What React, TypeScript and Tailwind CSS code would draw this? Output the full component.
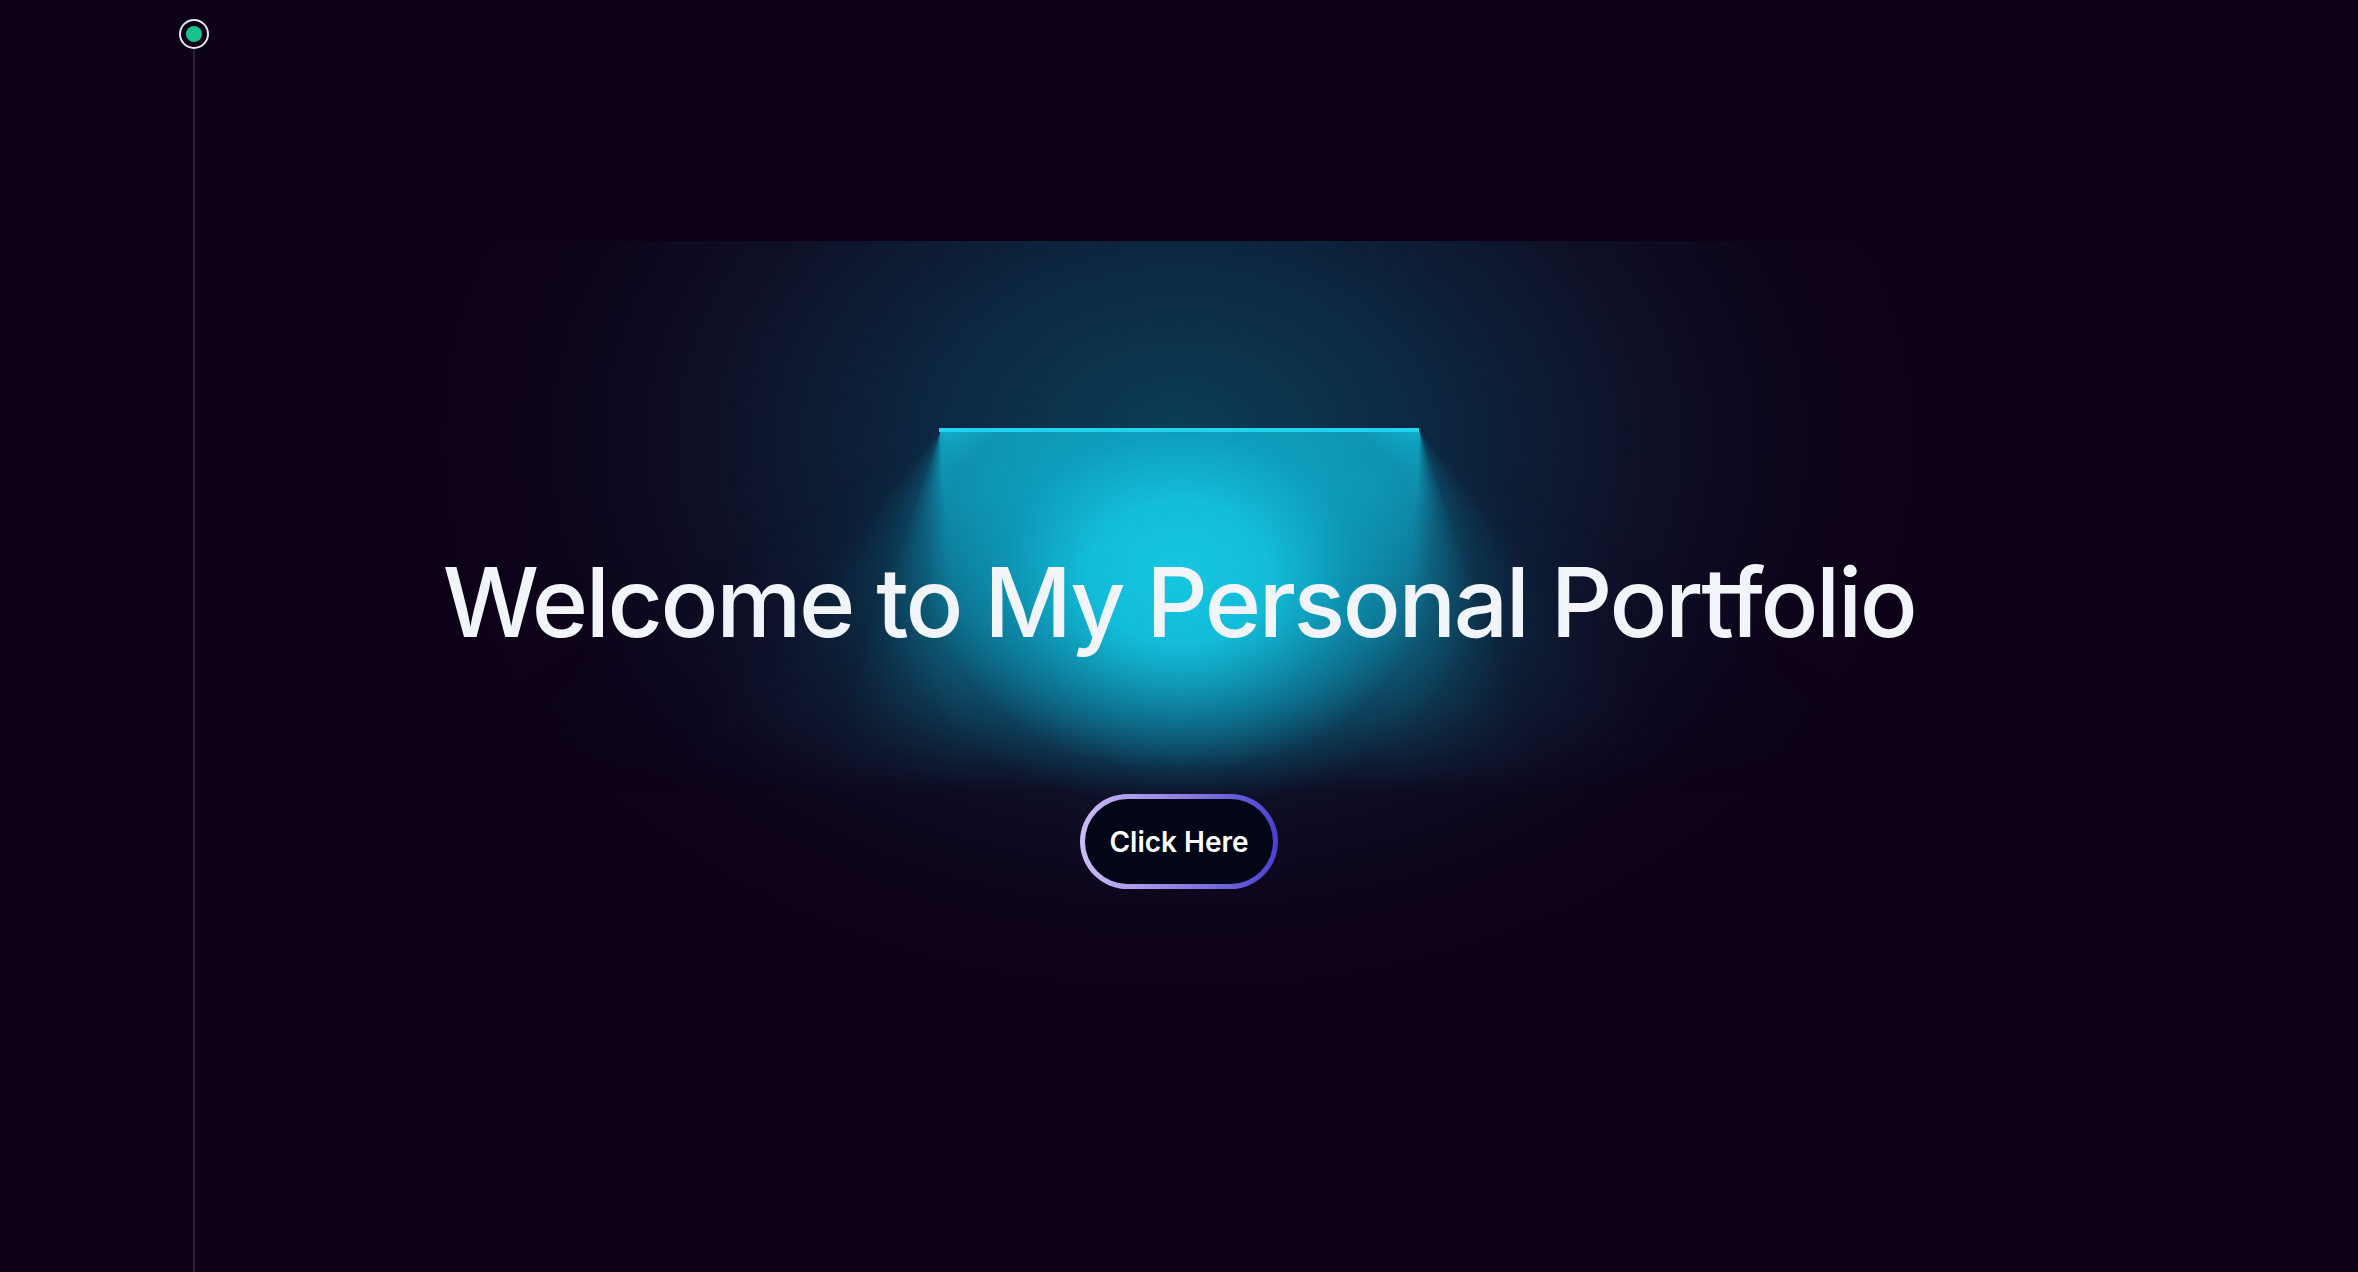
import React from "react";

export default function App() {
  return (
    <div className="relative min-h-screen w-full overflow-hidden bg-[#0d0118] font-['Inter','Noto_Sans',sans-serif]">
      {/* lamp glow layers */}
      <div className="pointer-events-none absolute inset-x-0 top-[241px] bottom-0 overflow-hidden">
        {/* broad dim teal glow */}
        <div className="absolute inset-0 bg-[radial-gradient(ellipse_780px_580px_at_1179px_200px,rgba(12,62,88,1)_0%,rgba(12,50,76,0.82)_30%,rgba(14,28,50,0.55)_60%,rgba(14,10,32,0.2)_85%,transparent_100%)]" />
        {/* below the line */}
        <div className="absolute inset-x-0 top-[191px] bottom-0 overflow-hidden">
          {/* left conic half */}
          <div className="absolute left-0 top-0 h-[520px] w-[1179px] bg-[conic-gradient(from_90deg_at_940px_0px,rgba(17,178,208,1)_0deg,rgba(16,170,202,0.95)_86deg,rgba(12,95,125,0.45)_110deg,rgba(12,50,80,0.15)_130deg,transparent_150deg,transparent_360deg)] [mask-image:linear-gradient(to_bottom,black_0px,black_60px,transparent_360px)]" />
          {/* right conic half */}
          <div className="absolute left-[1179px] top-0 h-[520px] w-[1179px] bg-[conic-gradient(from_120deg_at_241px_0px,transparent_0deg,rgba(12,50,80,0.15)_20deg,rgba(12,95,125,0.45)_40deg,rgba(16,170,202,0.95)_64deg,rgba(17,178,208,1)_150deg,transparent_150deg,transparent_360deg)] [mask-image:linear-gradient(to_bottom,black_0px,black_60px,transparent_360px)]" />
          {/* bright core */}
          <div className="absolute left-[879px] top-[-100px] h-[480px] w-[600px] bg-[radial-gradient(closest-side,#16c6e0_0%,#13bcd8_30%,rgba(13,150,182,0.7)_58%,rgba(12,80,110,0.28)_84%,transparent_100%)]" />
        </div>
      </div>

      {/* timeline */}
      <div className="absolute left-[179px] top-[19px] flex h-full flex-col items-center">
        <div className="flex h-[30px] w-[30px] items-center justify-center rounded-full border-2 border-[#e7e5ee]">
          <div className="h-[16px] w-[16px] rounded-full bg-[#14c48c]" />
        </div>
        <div className="w-[2px] flex-1 bg-[#28213a]" />
      </div>

      {/* content */}
      <div className="relative flex flex-col items-center pt-[428px]">
        <div className="h-[4px] w-[480px] bg-[#22d3ee]" />
        <h1 className="mt-[122px] text-[96px] font-medium leading-none tracking-tight text-[#f1f5f9] [font-feature-settings:'liga'_0,'calt'_0]">
          Welcome to My Personal Portfolio
        </h1>
        <button className="mt-[144px] rounded-full bg-gradient-to-r from-[#cdbcf7] via-[#8f80e4] to-[#4a3fd2] p-[5px]">
          <span className="flex h-[85px] items-center rounded-full bg-[#020617] px-[24px] text-[28px] font-semibold text-white">
            Click Here
          </span>
        </button>
      </div>
    </div>
  );
}
